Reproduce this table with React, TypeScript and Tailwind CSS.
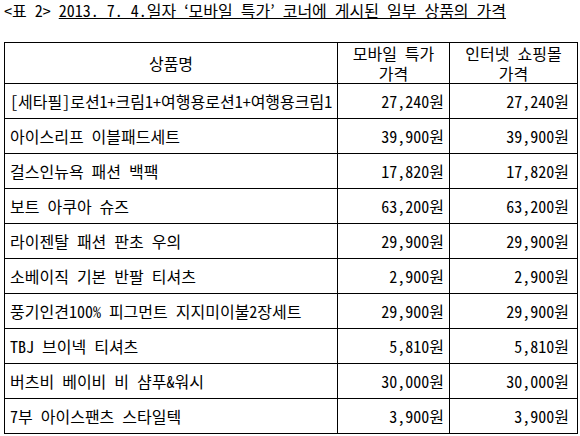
const rows: [string, string, string][] = [
  ["[세타필]로션1+크림1+여행용로션1+여행용크림1", "27,240원", "27,240원"],
  ["아이스리프 이블패드세트", "39,900원", "39,900원"],
  ["걸스인뉴욕 패션 백팩", "17,820원", "17,820원"],
  ["보트 아쿠아 슈즈", "63,200원", "63,200원"],
  ["라이젠탈 패션 판초 우의", "29,900원", "29,900원"],
  ["소베이직 기본 반팔 티셔츠", "2,900원", "2,900원"],
  ["풍기인견100% 피그먼트 지지미이불2장세트", "29,900원", "29,900원"],
  ["TBJ 브이넥 티셔츠", "5,810원", "5,810원"],
  ["버츠비 베이비 비 샴푸&워시", "30,000원", "30,000원"],
  ["7부 아이스팬츠 스타일텍", "3,900원", "3,900원"],
];

export default function App() {
  return (
    <div className="w-[580px] h-[436px] bg-white text-black font-['Noto_Sans_Mono_CJK_KR','Noto_Sans_CJK_KR',sans-serif] overflow-hidden">
      {/* CAPTION */}
      <div className="h-[42px] pl-[4px] text-[16px] leading-[20px] whitespace-pre">
        {"<표 2> "}
        <span className="underline underline-offset-[1px]">
          2013. 7. 4.일자 ‘모바일 특가’ 코너에 게시된 일부 상품의 가격
        </span>
      </div>

      {/* TABLE */}
      <table className="ml-[4px] w-[573px] table-fixed border-collapse text-[16px]">
        <colgroup>
          <col className="w-[333px]" />
          <col className="w-[112px]" />
          <col className="w-[128px]" />
        </colgroup>
        <thead>
          <tr className="h-[41px]">
            <th className="border border-black font-normal text-center">상품명</th>
            <th className="border border-black font-normal text-center leading-[20px]">
              모바일 특가
              <br />
              가격
            </th>
            <th className="border border-black font-normal text-center leading-[20px]">
              인터넷 쇼핑몰
              <br />
              가격
            </th>
          </tr>
        </thead>
        <tbody>
          {rows.map((r, i) => (
            <tr key={i} className="h-[35px]">
              <td className="border border-black pl-[5px] whitespace-nowrap">{r[0]}</td>
              <td className="border border-black pr-[5px] text-right">{r[1]}</td>
              <td className="border border-black pr-[8px] text-right">{r[2]}</td>
            </tr>
          ))}
        </tbody>
      </table>
    </div>
  );
}
